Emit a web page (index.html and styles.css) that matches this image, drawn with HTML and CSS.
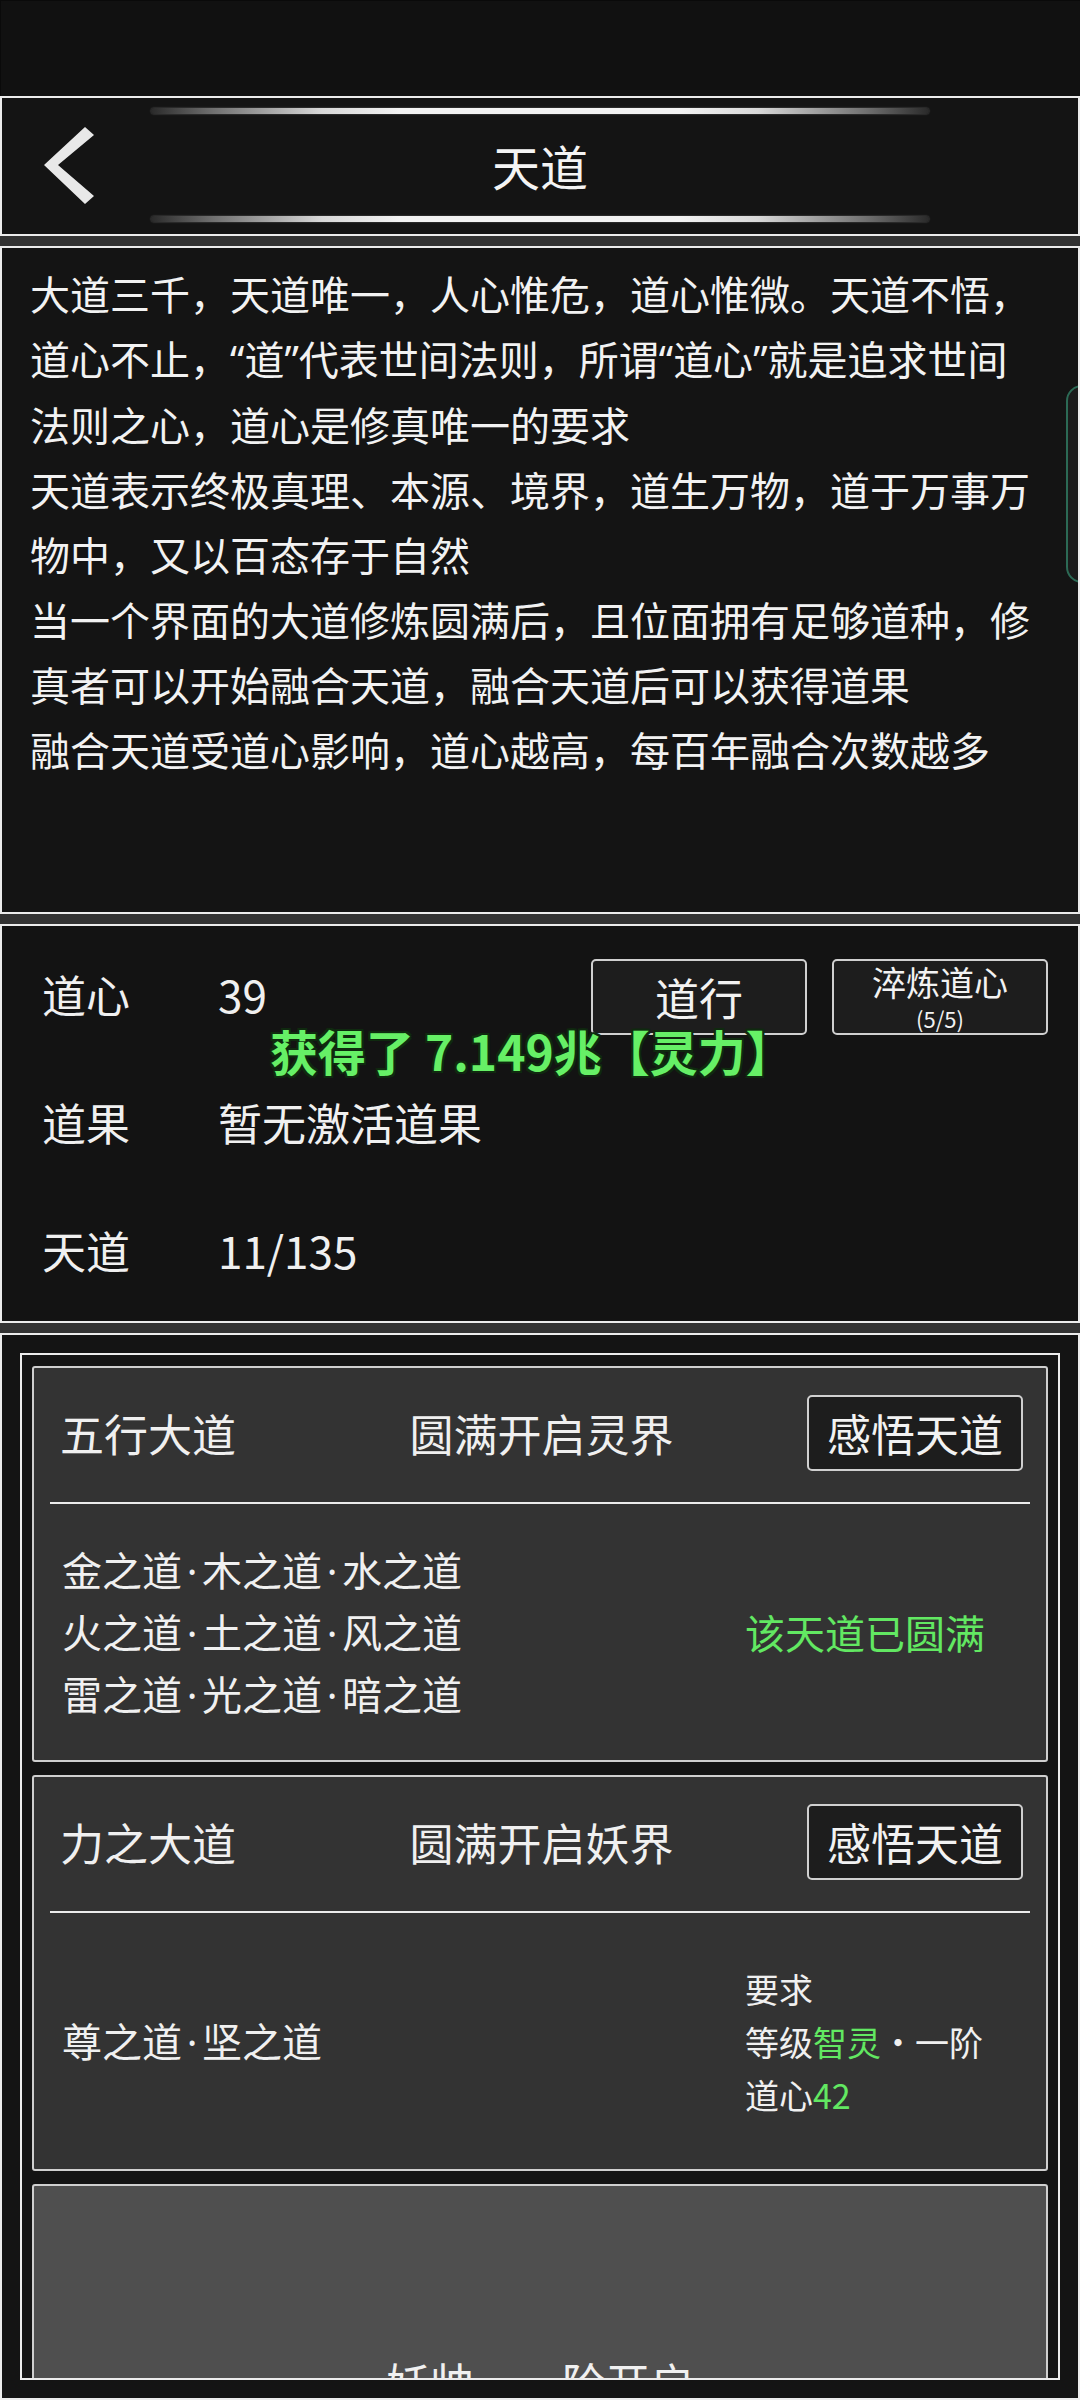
FILE: index.html
```html
<!DOCTYPE html>
<html lang="zh-CN">
<head>
<meta charset="utf-8">
<title>天道</title>
<link rel="stylesheet" href="styles.css">
</head>
<body>
<div class="status"></div>
<main class="page">
  <section class="panel header">
    <div class="glow"></div>
    <div class="header-row">
      <svg class="back" width="100" height="102" viewBox="0 0 100 102">
        <polygon points="83,13 92,21 56,51 92,82 83,90 42,51" fill="#e8e8e8"/>
      </svg>
      <h1 class="title">天道</h1>
      <span></span>
    </div>
    <div class="glow"></div>
  </section>

  <section class="panel intro">
    <p>大道三千，天道唯一，人心惟危，道心惟微。天道不悟，<br>道心不止，<span class="q">“</span>道<span class="q">”</span>代表世间法则，所谓<span class="q">“</span>道心<span class="q">”</span>就是追求世间<br>法则之心，道心是修真唯一的要求</p>
    <p>天道表示终极真理、本源、境界，道生万物，道于万事万<br>物中，又以百态存于自然</p>
    <p>当一个界面的大道修炼圆满后，且位面拥有足够道种，修<br>真者可以开始融合天道，融合天道后可以获得道果</p>
    <p>融合天道受道心影响，道心越高，每百年融合次数越多</p>
    <div class="tab"></div>
  </section>

  <section class="panel stats">
    <div class="stat-row">
      <span class="label">道心</span>
      <span class="value">39</span>
      <div class="actions">
        <button class="btn">道行</button>
        <button class="btn btn-two">
          <span class="btn-main">淬炼道心</span>
          <span class="btn-sub">(5/5)</span>
        </button>
      </div>
    </div>
    <div class="stat-row">
      <span class="label">道果</span>
      <span class="value">暂无激活道果</span>
    </div>
    <div class="stat-row">
      <span class="label">天道</span>
      <span class="value">11/135</span>
    </div>
    <div class="toast">获得了 7.149兆【灵力】</div>
  </section>

  <section class="panel list-panel">
    <div class="list">
      <div class="card">
        <div class="card-head">
          <span class="card-title">五行大道</span>
          <span class="card-mid">圆满开启灵界</span>
          <button class="btn card-btn">感悟天道</button>
        </div>
        <div class="divider"></div>
        <div class="card-body">
          <div class="ways">金之道<span class="dot">·</span>木之道<span class="dot">·</span>水之道<br>火之道<span class="dot">·</span>土之道<span class="dot">·</span>风之道<br>雷之道<span class="dot">·</span>光之道<span class="dot">·</span>暗之道</div>
          <div class="done">该天道已圆满</div>
        </div>
      </div>

      <div class="card">
        <div class="card-head">
          <span class="card-title">力之大道</span>
          <span class="card-mid">圆满开启妖界</span>
          <button class="btn card-btn">感悟天道</button>
        </div>
        <div class="divider"></div>
        <div class="card-body">
          <div class="ways">尊之道<span class="dot">·</span>坚之道</div>
          <div class="req">要求<br>等级<span class="green">智灵</span>·一阶<br>道心<span class="green">42</span></div>
        </div>
      </div>

      <div class="card card-locked">
        <div class="locked-text">妖帅·一阶开启</div>
      </div>
    </div>
  </section>
</main>
</body>
</html>
```
FILE: styles.css
```css
* { box-sizing: border-box; }
html, body { margin: 0; padding: 0; }
body {
  width: 1080px;
  height: 2400px;
  overflow: hidden;
  background: #333333;
  font-family: "Noto Sans CJK SC", "Noto Sans", sans-serif;
  color: #f0f0f0;
}
.status {
  height: 96px;
  background: #111111;
  border-top: 1px solid #0a0a0a;
  border-left: 1px solid #0a0a0a;
}
.page {
  display: flex;
  flex-direction: column;
  gap: 10px;
}
.panel {
  border: 2px solid #ececec;
  background: #141414;
  position: relative;
}

/* header */
.header {
  height: 140px;
  padding-top: 10px;
  display: flex;
  flex-direction: column;
  align-items: center;
}
.glow {
  width: 778px;
  height: 6px;
  border-radius: 3px;
  background: linear-gradient(to right, #2a2a2a 0%, #707070 8%, #d8d8d8 22%, #f2f2f2 32%, #f2f2f2 68%, #d8d8d8 78%, #707070 92%, #2a2a2a 100%);
  box-shadow: 0 0 2px rgba(255,255,255,0.35);
}
.header-row {
  width: 100%;
  height: 102px;
  display: grid;
  grid-template-columns: 1fr auto 1fr;
  align-items: center;
}
.back { display: block; }
.title {
  margin: 0;
  font-size: 48px;
  font-weight: 400;
  line-height: 60px;
  color: #f4f4f4;
}

/* intro text */
.intro {
  height: 668px;
  padding: 13px 0 0 28px;
  overflow: hidden;
}
.intro p {
  margin: 0;
  font-size: 40px;
  line-height: 65px;
  white-space: nowrap;
  color: #f2f2f2;
}
.q { font-family: "Noto Sans", sans-serif; }
.tab {
  position: absolute;
  top: 137px;
  left: 1064px;
  width: 34px;
  height: 198px;
  border: 2px solid #2c6a55;
  border-radius: 16px;
  background: #1b1b1b;
}

/* stats */
.stats {
  height: 399px;
  padding: 4px 30px 0 40px;
  background: #131313;
}
.stat-row {
  height: 128px;
  display: flex;
  align-items: center;
  font-size: 44px;
  line-height: 56px;
}
.label { width: 176px; }
.actions {
  margin-left: auto;
  margin-top: 6px;
  display: flex;
  gap: 25px;
}
.btn {
  font-family: inherit;
  color: #f2f2f2;
  background: #1d1d1d;
  border: 2px solid #d0d0d0;
  border-radius: 5px;
  width: 216px;
  height: 76px;
  padding: 0;
  font-size: 44px;
  line-height: 56px;
  display: flex;
  align-items: center;
  justify-content: center;
}
.btn-two {
  flex-direction: column;
}
.btn-main {
  font-size: 34px;
  line-height: 38px;
}
.btn-sub {
  font-size: 22px;
  line-height: 26px;
  margin-top: 4px;
}
.toast {
  position: absolute;
  left: 268px;
  top: 94px;
  white-space: nowrap;
  font-size: 48px;
  font-weight: 700;
  line-height: 60px;
  color: #66f066;
  text-shadow: -2px 0 #0f2a0f, 2px 0 #0f2a0f, 0 -2px #0f2a0f, 0 2px #0f2a0f, 2px 2px #0f2a0f, -2px 2px #0f2a0f, 2px -2px #0f2a0f, -2px -2px #0f2a0f;
}

/* list */
.list-panel {
  height: 1067px;
  padding: 18px 18px 0 18px;
}
.list {
  height: 1027px;
  border: 2px solid #ececec;
  padding: 11px 10px 0 10px;
  overflow: hidden;
  display: flex;
  flex-direction: column;
  gap: 13px;
}
.card {
  flex: none;
  height: 396px;
  border: 2px solid #cfcfcf;
  border-radius: 3px;
  background: #333333;
  display: flex;
  flex-direction: column;
}
.card-head {
  margin-top: 27px;
  padding: 0 23px 0 26px;
  display: grid;
  grid-template-columns: 1fr auto 1fr;
  align-items: center;
  font-size: 44px;
  line-height: 56px;
}
.card-btn { justify-self: end; }
.divider {
  margin: 31px 16px 0 16px;
  height: 2px;
  background: #ececec;
}
.card-body {
  flex: 1;
  display: grid;
  grid-template-columns: 1fr 301px;
  align-items: center;
  padding-left: 28px;
}
.ways {
  font-size: 40px;
  line-height: 60px;
  white-space: nowrap;
}
.dot {
  display: inline-block;
  width: 20px;
  text-align: center;
  font-family: "Noto Sans", sans-serif;
}
.done {
  font-size: 40px;
  line-height: 60px;
  color: #62e862;
}
.req {
  font-size: 34px;
  line-height: 53px;
  white-space: nowrap;
}
.green { color: #62e862; }
.card-locked {
  background: #4f4f4f;
  align-items: center;
  justify-content: center;
}
.locked-text {
  font-size: 44px;
  line-height: 56px;
}
```
